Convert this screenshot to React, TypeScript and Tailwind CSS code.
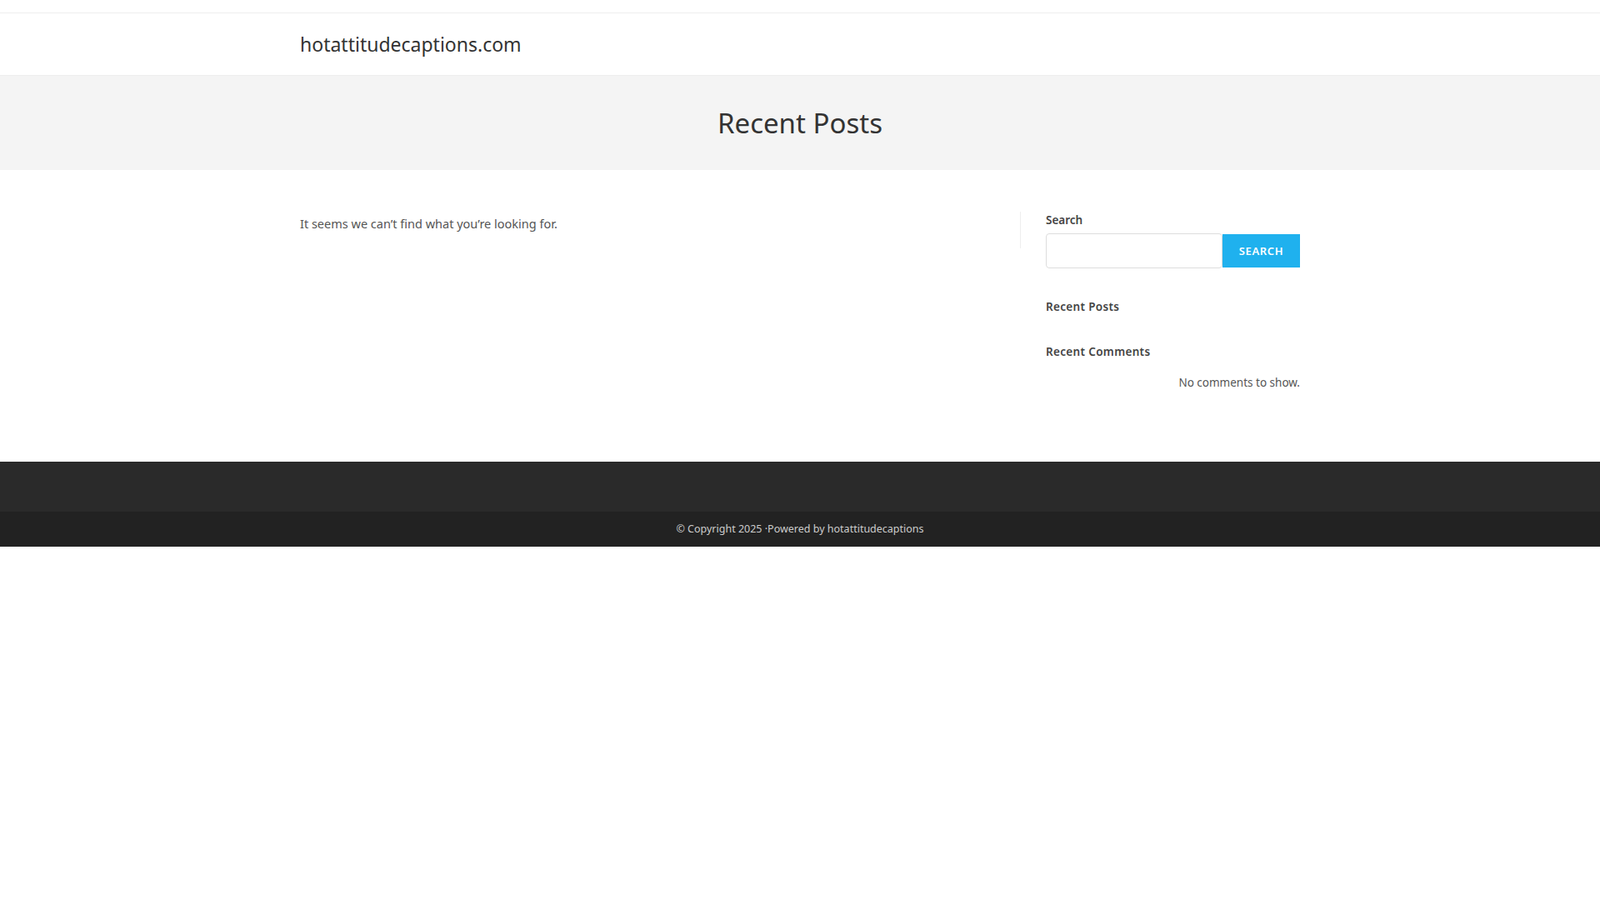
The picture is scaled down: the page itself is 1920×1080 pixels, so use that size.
export default function App() {
  return (
    <div className="min-h-[calc(100vh+2px)] bg-white font-['Open_Sans',sans-serif] text-[#555]">
      <div className="h-4 border-b border-[#eee]" />
      <header className="h-[75px] border-b border-[#eee]">
        <div className="mx-auto flex h-full max-w-[1200px] items-center">
          <a className="text-[23px] text-[#333]">hotattitudecaptions.com</a>
        </div>
      </header>
      <section className="flex h-[113px] items-center justify-center bg-[#f4f4f4]">
        <h1 className="text-[33px] text-[#333]">Recent Posts</h1>
      </section>
      <div className="mx-auto flex max-w-[1200px] pb-[85px] pt-[50px]">
        <main className="flex-1 pt-1 text-[14.5px]">It seems we can’t find what you’re looking for.</main>
        <div className="h-[44px] w-px bg-[#eee]" />
        <aside className="w-[335px] pl-[30px]">
          <h3 className="text-[13.5px] font-semibold text-[#444]">Search</h3>
          <div className="mt-1.5 flex">
            <input className="h-[42px] w-[212px] rounded-sm border border-[#ddd] outline-none" />
            <button className="mt-px h-[40px] w-[93px] bg-[#1fb1ee] text-[13px] font-semibold tracking-wider text-white">
              SEARCH
            </button>
          </div>
          <h3 className="mt-[36px] text-[13.5px] font-semibold tracking-wide text-[#444]">Recent Posts</h3>
          <h3 className="mt-[33px] text-[13.5px] font-semibold tracking-wide text-[#444]">Recent Comments</h3>
          <p className="mt-[17px] text-right text-[13.5px]">No comments to show.</p>
        </aside>
      </div>
      <footer>
        <div className="h-[60px] bg-[#2a2a2a]" />
        <div className="flex h-[42px] items-center justify-center bg-[#222] text-[12.5px] text-[#ccc]">
          © Copyright 2025 ·Powered by hotattitudecaptions
        </div>
      </footer>
    </div>
  );
}
